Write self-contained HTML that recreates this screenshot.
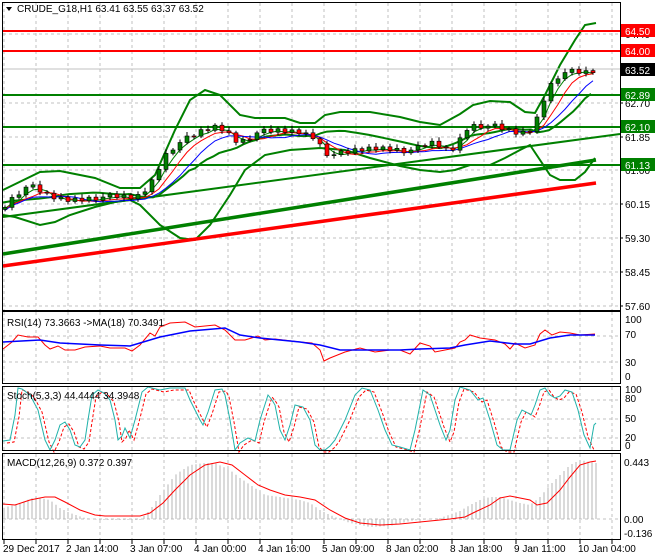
<!DOCTYPE html>
<html><head><meta charset="utf-8"><style>
body{margin:0;background:#fff;width:660px;height:560px;overflow:hidden;font-family:"Liberation Sans",sans-serif}
svg{display:block}
text{font-family:"Liberation Sans",sans-serif;font-size:10px}
</style></head><body>
<svg id="s" width="660" height="560" xmlns="http://www.w3.org/2000/svg">
<rect width="660" height="560" fill="#fff"/>
<g id="grid" stroke="#c0c0c0" stroke-dasharray="3,3" stroke-width="1"></g>
<g id="bb" fill="none" stroke="#008000" stroke-width="2"></g>
<line x1="3" y1="217" x2="620" y2="134" stroke="#008000" stroke-width="2"/>
<line x1="3" y1="254" x2="596" y2="160" stroke="#008000" stroke-width="3.5"/>
<line x1="3" y1="266" x2="596" y2="183" stroke="#ff0000" stroke-width="3.5"/>
<line x1="3" y1="31" x2="620" y2="31" stroke="#ff0000" stroke-width="2"/>
<line x1="3" y1="51" x2="620" y2="51" stroke="#ff0000" stroke-width="2"/>
<line x1="3" y1="95" x2="620" y2="95" stroke="#008000" stroke-width="2"/>
<line x1="3" y1="127" x2="620" y2="127" stroke="#008000" stroke-width="2"/>
<line x1="3" y1="165" x2="620" y2="165" stroke="#008000" stroke-width="2"/>
<line x1="3" y1="69" x2="620" y2="69" stroke="#c0c0c0" stroke-width="1"/>
<g id="ma" fill="none" stroke-width="1"></g>
<g id="candles"></g>
<g id="sub" fill="none"></g>
<g fill="none" stroke="#000" stroke-width="1">
<rect x="2.5" y="2.5" width="618" height="308"/>
<rect x="2.5" y="311.5" width="618" height="72"/>
<rect x="2.5" y="386.5" width="618" height="64"/>
<rect x="2.5" y="453.5" width="618" height="86"/>
</g>
<g id="ticks" stroke="#000"></g>
<path d="M6 7 L12 7 L9 11 Z" fill="#000"/>
<text x="17" y="12" font-size="11">CRUDE_G18,H1  63.41 63.55 63.37 63.52</text>
<text x="7" y="326">RSI(14) 73.3663  -&gt;MA(18) 70.3491</text>
<text x="7" y="399">Stoch(5,3,3) 44.4444 34.3948</text>
<text x="7" y="466">MACD(12,26,9) 0.372 0.397</text>
<g font-size="10" fill="#000">
<text x="625" y="38">64.40</text>
<text x="625" y="107">62.70</text>
<text x="625" y="141">61.85</text>
<text x="625" y="174">61.00</text>
<text x="625" y="208">60.15</text>
<text x="625" y="242">59.30</text>
<text x="625" y="276">58.45</text>
<text x="625" y="310">57.60</text>
</g>
<rect x="621" y="24" width="34" height="13" fill="#ff0000"/><text x="625" y="35" fill="#fff">64.50</text>
<rect x="621" y="44" width="34" height="13" fill="#ff0000"/><text x="625" y="55" fill="#fff">64.00</text>
<rect x="621" y="63" width="34" height="13" fill="#000"/><text x="625" y="74" fill="#fff">63.52</text>
<rect x="621" y="88" width="34" height="13" fill="#008000"/><text x="625" y="99" fill="#fff">62.89</text>
<rect x="621" y="120" width="34" height="13" fill="#008000"/><text x="625" y="131" fill="#fff">62.10</text>
<rect x="621" y="158" width="34" height="13" fill="#008000"/><text x="625" y="169" fill="#fff">61.13</text>
<g font-size="10" fill="#000">
<text x="625" y="323">100</text><text x="625" y="338">70</text><text x="625" y="366">30</text><text x="625" y="380">0</text>
<text x="625" y="393">100</text><text x="625" y="402">80</text><text x="625" y="422">50</text><text x="625" y="441">20</text><text x="625" y="449">0</text>
<text x="624" y="466">0.443</text><text x="624" y="523">0.00</text><text x="624" y="537">-0.136</text>
</g>
<g font-size="10" fill="#000">
<text x="3" y="552">29 Dec 2017</text>
<text x="66" y="552">2 Jan 14:00</text>
<text x="130" y="552">3 Jan 07:00</text>
<text x="194" y="552">4 Jan 00:00</text>
<text x="258" y="552">4 Jan 16:00</text>
<text x="322" y="552">5 Jan 09:00</text>
<text x="386" y="552">8 Jan 02:00</text>
<text x="450" y="552">8 Jan 18:00</text>
<text x="514" y="552">9 Jan 11:00</text>
<text x="578" y="552">10 Jan 04:00</text>
</g>
</svg>
<script>
var NS="http://www.w3.org/2000/svg";
function el(p,t,a){var e=document.createElementNS(NS,t);for(var k in a)e.setAttribute(k,a[k]);document.getElementById(p).appendChild(e);return e;}
function interp(pts,x){if(x<=pts[0][0])return pts[0][1];for(var i=1;i<pts.length;i++){if(x<=pts[i][0]){var a=pts[i-1],b=pts[i];return a[1]+(b[1]-a[1])*(x-a[0])/(b[0]-a[0]);}}return pts[pts.length-1][1];}
function pl(p,pts,a){a.points=pts.map(function(q){return q[0]+","+q[1]}).join(" ");a.fill="none";return el(p,"polyline",a);}
[4,36,68,100,132,164,196,228,260,292,324,356,388,420,452,484,516,548,580,612].forEach(function(x){
 el("grid","line",{x1:x,y1:3,x2:x,y2:310});el("grid","line",{x1:x,y1:312,x2:x,y2:383});
 el("grid","line",{x1:x,y1:387,x2:x,y2:450});el("grid","line",{x1:x,y1:454,x2:x,y2:539});
 el("ticks","line",{x1:x,y1:540,x2:x,y2:544});});
[34,103,137,170,204,238,272,306,336,362,400,419,438,519].forEach(function(y){el("grid","line",{x1:3,y1:y,x2:620,y2:y});});
[31,51,69,95,103,127,137,165,170,204,238,272,306].forEach(function(y){el("ticks","line",{x1:620,y1:y,x2:623,y2:y});});
var P=[[5,205],[15,195],[25,187],[35,188],[45,195],[55,198],[70,200],[85,198],[100,197],[120,197],[135,198],[140,195],[150,185],[160,165],[165,155],[175,145],[185,140],[195,135],[205,130],[215,127],[225,130],[235,140],[245,140],[255,133],[265,132],[280,131],[300,132],[315,137],[325,152],[335,155],[345,153],[360,150],[375,148],[390,148],[405,150],[415,150],[425,145],[435,143],[445,150],[455,148],[465,130],[470,125],[480,125],[495,127],[505,130],[515,133],[525,133],[535,127],[540,105],[545,97],[550,85],[555,80],[560,73],[570,72],[580,73],[590,73],[596,70]];
var closes=[],xs=[];for(var x=5;x<=596;x+=7){xs.push(x);var j=((x*37)%11-5)*0.6;closes.push(interp(P,x)+(x<596?j:0));}
function ma(n,off){var r=[];for(var i=0;i<closes.length;i++){var s=0,c=0;for(var k=Math.max(0,i-n+1);k<=i;k++){s+=closes[k];c++;}r.push([xs[i],s/c+off]);}return r;}
pl("ma",ma(3,1),{stroke:"#008000"});pl("ma",ma(5,2),{stroke:"#ff0000"});pl("ma",ma(8,3),{stroke:"#0000ff"});
for(var i=0;i<closes.length;i++){var c=closes[i],o=i?closes[i-1]:c+2;var hi=Math.min(o,c)-2-(i%3),lo=Math.max(o,c)+2+(i%2);
 el("candles","line",{x1:xs[i],y1:hi,x2:xs[i],y2:lo,stroke:"#000"});
 var t=Math.min(o,c),h=Math.max(1,Math.abs(o-c));
 el("candles","rect",{x:xs[i]-2,y:t,width:4,height:h,fill:c<o?"#008000":"#ff0000",stroke:"#000","stroke-width":0.6});}
var UP=[[3,190],[40,172],[60,171],[95,178],[120,188],[140,188],[155,175],[175,130],[190,100],[205,90],[220,95],[240,115],[255,118],[285,118],[300,123],[315,123],[325,115],[340,112],[370,112],[400,117],[420,122],[440,125],[460,114],[473,105],[490,101],[510,102],[525,112],[535,113],[545,95],[560,65],[575,40],[585,25],[596,23]];
var LO=[[3,215],[15,217],[40,225],[55,222],[70,215],[95,207],[115,202],[130,200],[140,205],[160,225],[180,238],[195,240],[210,225],[230,195],[245,170],[265,155],[290,150],[320,148],[345,150],[370,158],[400,166],[420,170],[440,172],[455,170],[470,165],[490,165],[505,158],[520,150],[530,145],[540,160],[550,175],[560,180],[575,180],[585,172],[595,158]];
pl("bb",UP,{});pl("bb",LO,{});
var MID=[];for(var x=3;x<=596;x+=6){MID.push([x,(interp(UP,x)+interp(LO,x))/2]);}pl("bb",MID,{});
pl("sub",[[3,349],[12,342],[18,335],[28,337],[38,337],[45,345],[50,349],[58,346],[65,350],[75,350],[85,347],[100,346],[110,348],[125,348],[132,351],[140,345],[150,333],[155,336],[160,327],[170,323],[185,322],[195,327],[215,325],[225,330],[230,335],[235,340],[245,340],[258,336],[265,340],[275,339],[300,342],[312,343],[320,350],[324,361],[330,358],[345,352],[360,348],[375,352],[390,350],[400,350],[410,354],[420,343],[430,346],[435,352],[445,350],[455,348],[460,342],[465,340],[470,335],[480,338],[495,340],[505,344],[510,349],[515,343],[525,348],[535,345],[540,334],[545,330],[552,335],[560,332],[570,333],[580,335],[595,334]],{stroke:"#ff0000"});
pl("sub",[[3,342],[40,340],[60,343],[100,345],[130,346],[160,337],[190,331],[225,328],[240,335],[260,338],[300,342],[320,345],[340,350],[370,350],[400,350],[420,349],[450,348],[465,345],[490,341],[515,344],[530,344],[550,338],[570,335],[595,335]],{stroke:"#0000ff","stroke-width":1.5});
var ST=[[3,441],[10,440],[15,415],[18,388],[22,389],[30,395],[38,410],[45,440],[50,450],[55,440],[60,425],[65,422],[70,430],[75,445],[80,447],[85,440],[88,420],[92,395],[98,390],[104,393],[110,400],[115,420],[118,440],[122,436],[125,428],[130,438],[135,420],[142,392],[148,387],[160,390],[170,388],[185,388],[190,400],[200,420],[203,425],[208,412],[215,390],[222,389],[225,395],[230,420],[235,450],[240,443],[248,438],[255,441],[260,420],[268,395],[272,400],[275,405],[280,430],[285,440],[290,425],[295,405],[303,407],[310,420],[315,445],[320,450],[325,450],[330,446],[335,440],[345,420],[355,395],[362,388],[370,390],[378,410],[385,430],[392,445],[400,447],[410,450],[415,430],[423,390],[430,395],[435,410],[440,425],[446,440],[450,430],[455,400],[460,387],[470,390],[478,400],[483,398],[490,420],[497,445],[503,450],[510,450],[517,420],[522,410],[528,413],[531,415],[535,405],[540,390],[545,388],[550,395],[555,398],[560,396],[565,390],[572,392],[578,410],[584,435],[590,448],[594,425],[596,423]];
pl("sub",ST.map(function(q){return[q[0]+4,q[1]+2]}).filter(function(q){return q[0]<=596}),{stroke:"#ff0000","stroke-dasharray":"3,2"});
pl("sub",ST,{stroke:"#20b2aa"});
var H=[[3,508],[20,503],[35,497],[50,500],[60,508],[70,513],[85,518],[100,520],[140,520],[150,510],[160,495],[175,475],[190,465],[205,463],[215,463],[230,470],[240,478],[255,488],[265,495],[280,497],[300,500],[310,503],[320,510],[330,515],[350,523],[370,527],[390,526],[410,521],[440,518],[460,511],[470,505],[480,500],[490,497],[500,497],[510,500],[520,503],[530,505],[540,497],[550,485],[560,475],[570,465],[580,460],[590,462],[596,463]];
for(var x=4;x<=596;x+=4){var y=interp(H,x);el("sub","line",{x1:x,y1:519,x2:x,y2:y,stroke:"#b4b4b4"});}
pl("sub",[[3,504],[15,505],[30,500],[45,497],[55,497],[65,502],[80,510],[95,515],[105,516],[120,516],[140,516],[150,513],[163,503],[175,490],[190,475],[205,465],[220,462],[232,465],[245,475],[258,485],[270,490],[285,495],[300,497],[315,500],[330,510],[345,518],[360,523],[380,525],[400,524],[420,522],[440,520],[450,519],[465,517],[475,512],[490,505],[500,498],[510,496],[520,498],[530,500],[537,505],[547,503],[560,490],[570,477],[580,465],[590,462],[596,461]],{stroke:"#ff0000"});
</script>
</body></html>
